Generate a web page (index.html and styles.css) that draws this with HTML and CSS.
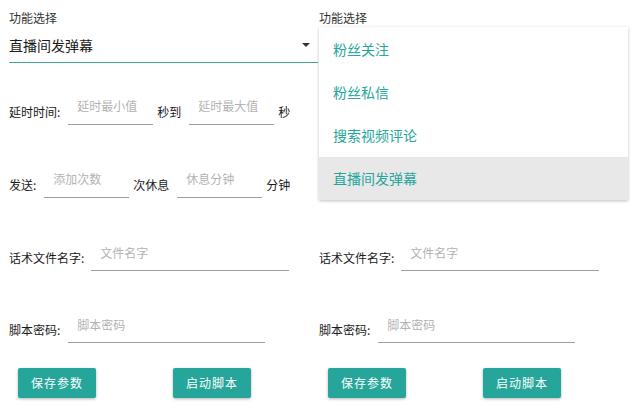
FILE: index.html
```html
<!DOCTYPE html>
<html lang="zh">

<head>
    <meta charset="utf-8">
    <meta name="viewport" content="width=device-width, initial-scale=1" />
    <title>script</title>
    <link rel="stylesheet" href="styles.css">
</head>

<body>
    <div class="screens">
        <!-- settings page -->
        <div class="screen">
            <div class="caption">功能选择</div>
            <div class="select">
                <span>直播间发弹幕</span>
                <span class="arrow"></span>
            </div>
            <div class="row row1">
                <span class="label">延时时间:</span>
                <div class="input short"><span>延时最小值</span></div>
                <span class="label">秒到</span>
                <div class="input short"><span>延时最大值</span></div>
                <span class="label">秒</span>
            </div>
            <div class="row row2">
                <span class="label">发送:</span>
                <div class="input short"><span>添加次数</span></div>
                <span class="label">次休息</span>
                <div class="input short"><span>休息分钟</span></div>
                <span class="label">分钟</span>
            </div>
            <div class="row row3">
                <span class="label">话术文件名字:</span>
                <div class="input long"><span>文件名字</span></div>
            </div>
            <div class="row row4">
                <span class="label">脚本密码:</span>
                <div class="input long"><span>脚本密码</span></div>
            </div>
            <div class="buttons">
                <div class="btn">保存参数</div>
                <div class="btn">启动脚本</div>
            </div>
        </div>

        <!-- same page with the mode list open (fields under the list are hidden) -->
        <div class="screen">
            <div class="caption">功能选择</div>
            <div class="select covered">
                <span>直播间发弹幕</span>
                <span class="arrow"></span>
            </div>
            <div class="row row1 covered">
                <span class="label">延时时间:</span>
                <div class="input short"><span>延时最小值</span></div>
                <span class="label">秒到</span>
                <div class="input short"><span>延时最大值</span></div>
                <span class="label">秒</span>
            </div>
            <div class="row row2 covered">
                <span class="label">发送:</span>
                <div class="input short"><span>添加次数</span></div>
                <span class="label">次休息</span>
                <div class="input short"><span>休息分钟</span></div>
                <span class="label">分钟</span>
            </div>
            <div class="row row3">
                <span class="label">话术文件名字:</span>
                <div class="input long"><span>文件名字</span></div>
            </div>
            <div class="row row4">
                <span class="label">脚本密码:</span>
                <div class="input long"><span>脚本密码</span></div>
            </div>
            <div class="buttons">
                <div class="btn">保存参数</div>
                <div class="btn">启动脚本</div>
            </div>
            <ul class="menu">
                <li>粉丝关注</li>
                <li>粉丝私信</li>
                <li>搜索视频评论</li>
                <li class="active">直播间发弹幕</li>
            </ul>
        </div>
    </div>
</body>

</html>
```

FILE: styles.css
```css
body {
    margin: 0;
    background: #fff;
    color: #222;
    font-family: "Noto Sans CJK SC", "Roboto", sans-serif;
}

.screens {
    display: flex;
}

.screen {
    position: relative;
    width: 310px;
    height: 408px;
    padding-left: 9px;
    box-sizing: border-box;
    display: flex;
    flex-direction: column;
}

.covered {
    visibility: hidden;
}

.caption {
    margin-top: 10px;
    font-size: 12px;
    line-height: 16px;
    color: #333;
}

.select {
    width: 309px;
    height: 37px;
    flex-shrink: 0;
    border-bottom: 1px solid #3fa98c;
    display: flex;
    align-items: center;
    justify-content: space-between;
    font-size: 14px;
    line-height: 22px;
    color: #1a1a1a;
    padding-top: 1px;
    box-sizing: border-box;
}

.arrow {
    width: 0;
    height: 0;
    margin-right: 8px;
    border-left: 4px solid transparent;
    border-right: 4px solid transparent;
    border-top: 4px solid #333;
}

.row {
    display: flex;
    align-items: center;
    height: 28px;
    flex-shrink: 0;
}

.row1 {
    margin-top: 34px;
}

.row2 {
    margin-top: 45px;
}

.row3 {
    margin-top: 45px;
}

.row4 {
    margin-top: 44px;
}

.label {
    font-size: 12px;
    line-height: 16px;
    color: #1a1a1a;
    margin-bottom: -2px;
}

.input {
    height: 28px;
    box-sizing: border-box;
    margin: 0 4px 0 8px;
    padding-left: 9px;
    border-bottom: 1px solid #9e9e9e;
    font-size: 12px;
    line-height: 20px;
    color: #b3b3b3;
}

.input.short {
    width: 85px;
}

.input.long {
    width: 198px;
    margin-left: 7px;
}

.row4 .input.long {
    margin-left: 8px;
    width: 197px;
}

.row2 .input span,
.row1 .input span {
    position: relative;
    top: -1px;
}

.buttons {
    display: flex;
    margin-top: 25px;
    padding-left: 9px;
    gap: 77px;
}

.btn {
    width: 78px;
    height: 30px;
    background: #26a69a;
    color: #fff;
    font-size: 12px;
    letter-spacing: 1px;
    line-height: 30px;
    text-align: center;
    border-radius: 2px;
    box-shadow: 0 1px 3px rgba(0, 0, 0, 0.3);
}

.menu {
    list-style: none;
    margin: 0;
    padding: 0;
    position: absolute;
    top: 27px;
    left: 9px;
    width: 309px;
    background: #fff;
    box-shadow: 0 1px 3px rgba(0, 0, 0, 0.25);
}

.menu li {
    height: 43px;
    line-height: 43px;
    padding-left: 14px;
    font-size: 14px;
    color: #26a69a;
}

.menu li:first-child {
    height: 44px;
    line-height: 44px;
}

.menu li.active {
    background: #e8e8e8;
}
```
